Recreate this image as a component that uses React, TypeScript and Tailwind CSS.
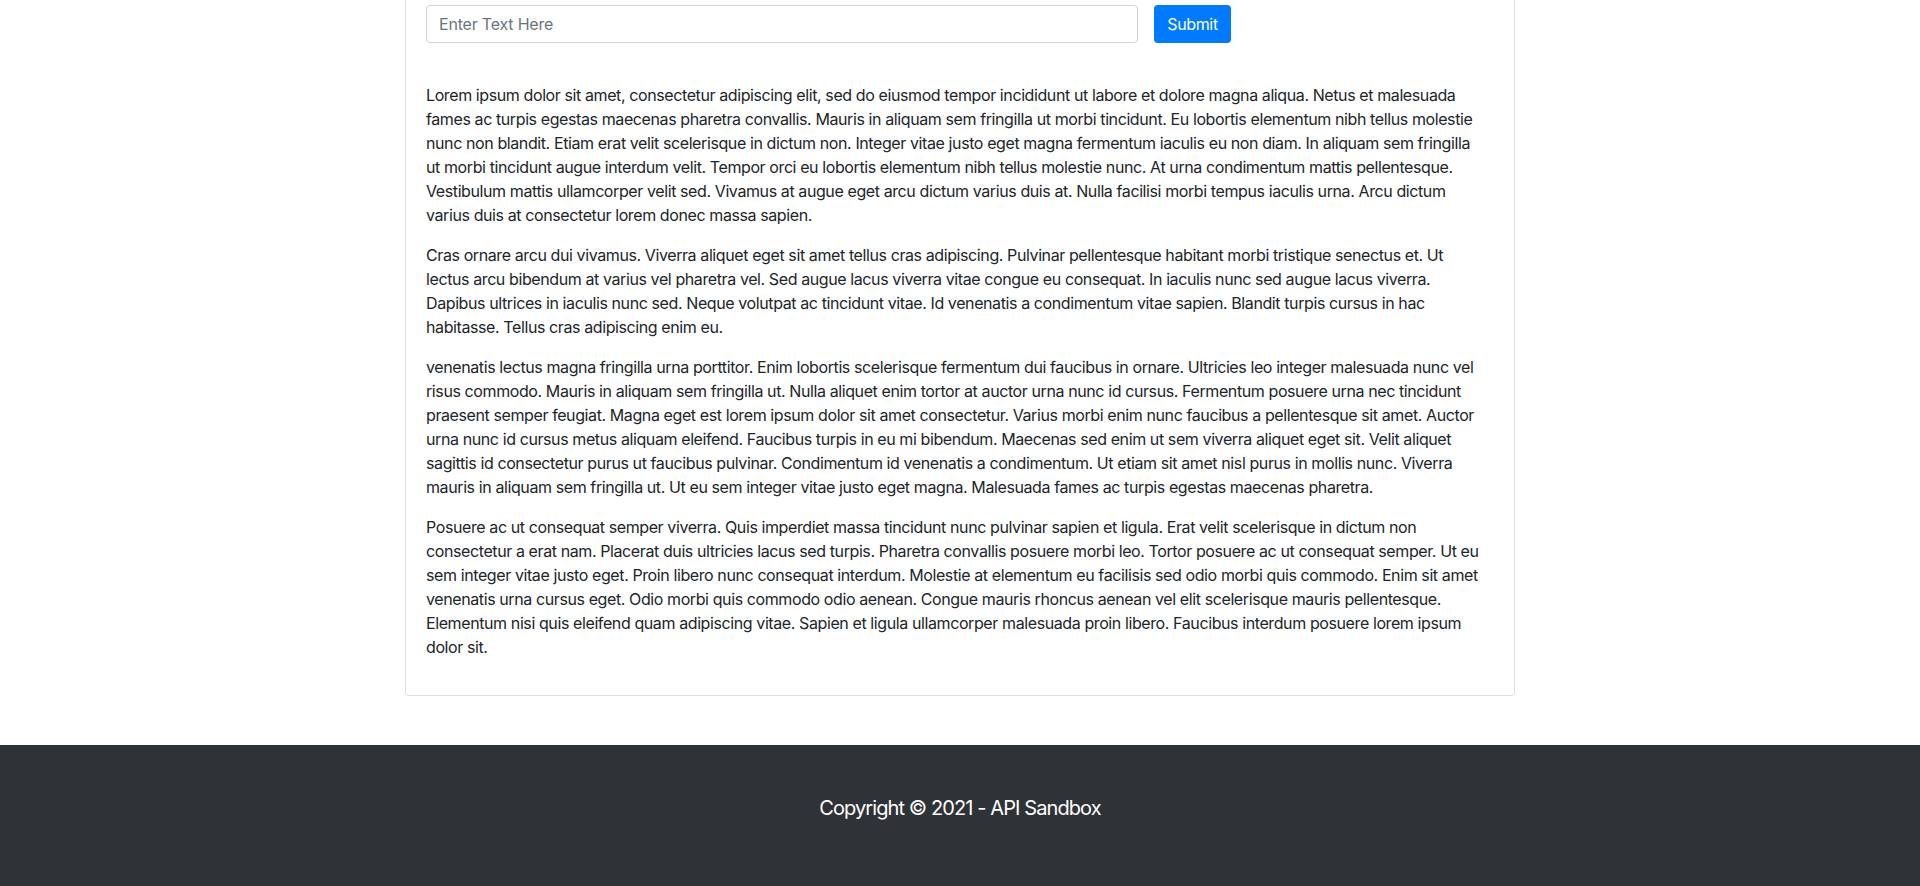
import React from "react";

const paragraphs: string[][] = [
  [
    "Lorem ipsum dolor sit amet, consectetur adipiscing elit, sed do eiusmod tempor incididunt ut labore et dolore magna aliqua. Netus et malesuada",
    "fames ac turpis egestas maecenas pharetra convallis. Mauris in aliquam sem fringilla ut morbi tincidunt. Eu lobortis elementum nibh tellus molestie",
    "nunc non blandit. Etiam erat velit scelerisque in dictum non. Integer vitae justo eget magna fermentum iaculis eu non diam. In aliquam sem fringilla",
    "ut morbi tincidunt augue interdum velit. Tempor orci eu lobortis elementum nibh tellus molestie nunc. At urna condimentum mattis pellentesque.",
    "Vestibulum mattis ullamcorper velit sed. Vivamus at augue eget arcu dictum varius duis at. Nulla facilisi morbi tempus iaculis urna. Arcu dictum",
    "varius duis at consectetur lorem donec massa sapien.",
  ],
  [
    "Cras ornare arcu dui vivamus. Viverra aliquet eget sit amet tellus cras adipiscing. Pulvinar pellentesque habitant morbi tristique senectus et. Ut",
    "lectus arcu bibendum at varius vel pharetra vel. Sed augue lacus viverra vitae congue eu consequat. In iaculis nunc sed augue lacus viverra.",
    "Dapibus ultrices in iaculis nunc sed. Neque volutpat ac tincidunt vitae. Id venenatis a condimentum vitae sapien. Blandit turpis cursus in hac",
    "habitasse. Tellus cras adipiscing enim eu.",
  ],
  [
    "venenatis lectus magna fringilla urna porttitor. Enim lobortis scelerisque fermentum dui faucibus in ornare. Ultricies leo integer malesuada nunc vel",
    "risus commodo. Mauris in aliquam sem fringilla ut. Nulla aliquet enim tortor at auctor urna nunc id cursus. Fermentum posuere urna nec tincidunt",
    "praesent semper feugiat. Magna eget est lorem ipsum dolor sit amet consectetur. Varius morbi enim nunc faucibus a pellentesque sit amet. Auctor",
    "urna nunc id cursus metus aliquam eleifend. Faucibus turpis in eu mi bibendum. Maecenas sed enim ut sem viverra aliquet eget sit. Velit aliquet",
    "sagittis id consectetur purus ut faucibus pulvinar. Condimentum id venenatis a condimentum. Ut etiam sit amet nisl purus in mollis nunc. Viverra",
    "mauris in aliquam sem fringilla ut. Ut eu sem integer vitae justo eget magna. Malesuada fames ac turpis egestas maecenas pharetra.",
  ],
  [
    "Posuere ac ut consequat semper viverra. Quis imperdiet massa tincidunt nunc pulvinar sapien et ligula. Erat velit scelerisque in dictum non",
    "consectetur a erat nam. Placerat duis ultricies lacus sed turpis. Pharetra convallis posuere morbi leo. Tortor posuere ac ut consequat semper. Ut eu",
    "sem integer vitae justo eget. Proin libero nunc consequat interdum. Molestie at elementum eu facilisis sed odio morbi quis commodo. Enim sit amet",
    "venenatis urna cursus eget. Odio morbi quis commodo odio aenean. Congue mauris rhoncus aenean vel elit scelerisque mauris pellentesque.",
    "Elementum nisi quis eleifend quam adipiscing vitae. Sapien et ligula ullamcorper malesuada proin libero. Faucibus interdum posuere lorem ipsum",
    "dolor sit.",
  ],
];

export default function App() {
  return (
    <div
      className="bg-white text-[#212529] text-[16px] leading-[24px]"
      style={{ fontFamily: "Inter, 'Noto Sans', sans-serif" }}
    >
      <div className="mx-auto w-[1110px]">
        <div className="border border-t-0 border-[rgba(0,0,0,0.125)] rounded-b-[4px] px-[20px] pt-[5px] pb-[20px]">
          <form className="flex items-center gap-[16px]" onSubmit={(e) => e.preventDefault()}>
            <input
              type="text"
              placeholder="Enter Text Here"
              className="w-[712px] h-[38px] px-[12px] border border-[#ced4da] rounded-[4px] text-[16px] tracking-[-0.2px] text-[#495057] placeholder:text-[#6c757d] outline-none"
            />
            <button
              type="submit"
              className="h-[38px] w-[77px] rounded-[4px] bg-[#007bff] text-white text-[16px] tracking-[-0.35px]"
            >
              Submit
            </button>
          </form>
          <div className="mt-[40px] tracking-[-0.4px] whitespace-nowrap">
            {paragraphs.map((lines, i) => (
              <p key={i} className="mb-[16px]">
                {lines.map((l, j) => (
                  <React.Fragment key={j}>
                    {l}
                    {j < lines.length - 1 && <br />}
                  </React.Fragment>
                ))}
              </p>
            ))}
          </div>
        </div>
      </div>
      <footer className="mt-[49px] h-[142px] bg-[#2f3337] pt-[48px] text-center text-white text-[20px] leading-[30px] tracking-[-0.9px]">
        Copyright © 2021 - API Sandbox
      </footer>
    </div>
  );
}
